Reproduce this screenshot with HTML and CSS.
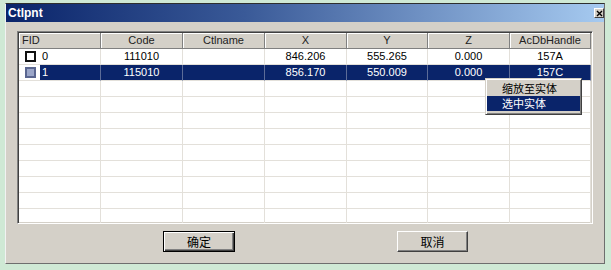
FILE: index.html
```html
<!DOCTYPE html>
<html>
<head>
<meta charset="utf-8">
<link rel="stylesheet" href="styles.css">
</head>
<body>
<div class="dialog">
  <div class="titlebar">
    <span class="title">Ctlpnt</span>
    <span class="close"><svg width="7" height="7" viewBox="0 0 7 7"><path d="M1 1 L6 6 M6 1 L1 6" stroke="#000" stroke-width="1.4"/></svg></span>
  </div>
  <div class="content">
    <div class="grid">
      <div class="row head">
        <div class="cell left">FID</div>
        <div class="cell">Code</div>
        <div class="cell">Ctlname</div>
        <div class="cell">X</div>
        <div class="cell">Y</div>
        <div class="cell">Z</div>
        <div class="cell">AcDbHandle</div>
      </div>
      <div class="row">
        <div class="cell fid"><span class="cbwrap"><span class="cb"></span></span><span class="fidtext">0</span></div>
        <div class="cell">111010</div>
        <div class="cell"></div>
        <div class="cell">846.206</div>
        <div class="cell">555.265</div>
        <div class="cell">0.000</div>
        <div class="cell">157A</div>
      </div>
      <div class="row sel">
        <div class="cell fid"><span class="cbwrap"><span class="cb cbsel"></span></span><span class="fidtext">1</span></div>
        <div class="cell">115010</div>
        <div class="cell"></div>
        <div class="cell">856.170</div>
        <div class="cell">550.009</div>
        <div class="cell">0.000</div>
        <div class="cell">157C</div>
      </div>
      <div class="row"><div class="cell"></div><div class="cell"></div><div class="cell"></div><div class="cell"></div><div class="cell"></div><div class="cell"></div><div class="cell"></div></div>
      <div class="row"><div class="cell"></div><div class="cell"></div><div class="cell"></div><div class="cell"></div><div class="cell"></div><div class="cell"></div><div class="cell"></div></div>
      <div class="row"><div class="cell"></div><div class="cell"></div><div class="cell"></div><div class="cell"></div><div class="cell"></div><div class="cell"></div><div class="cell"></div></div>
      <div class="row"><div class="cell"></div><div class="cell"></div><div class="cell"></div><div class="cell"></div><div class="cell"></div><div class="cell"></div><div class="cell"></div></div>
      <div class="row"><div class="cell"></div><div class="cell"></div><div class="cell"></div><div class="cell"></div><div class="cell"></div><div class="cell"></div><div class="cell"></div></div>
      <div class="row"><div class="cell"></div><div class="cell"></div><div class="cell"></div><div class="cell"></div><div class="cell"></div><div class="cell"></div><div class="cell"></div></div>
      <div class="row"><div class="cell"></div><div class="cell"></div><div class="cell"></div><div class="cell"></div><div class="cell"></div><div class="cell"></div><div class="cell"></div></div>
      <div class="row"><div class="cell"></div><div class="cell"></div><div class="cell"></div><div class="cell"></div><div class="cell"></div><div class="cell"></div><div class="cell"></div></div>
      <div class="row"><div class="cell"></div><div class="cell"></div><div class="cell"></div><div class="cell"></div><div class="cell"></div><div class="cell"></div><div class="cell"></div></div>
    </div>
    <div class="buttons">
      <button class="btn default">确定</button>
      <button class="btn cancel">取消</button>
    </div>
  </div>
  <div class="menu">
    <div class="item">缩放至实体</div>
    <div class="item active">选中实体</div>
  </div>
</div>
</body>
</html>
```
FILE: styles.css
```css
html, body {
  margin: 0;
  padding: 0;
}
body {
  width: 611px;
  height: 270px;
  overflow: hidden;
  background: #cfe9d5;
  font-family: "Liberation Sans", "Noto Sans CJK SC", sans-serif;
  font-size: 11px;
  color: #000;
}
.dialog {
  position: relative;
  margin: 3px 0 0 5px;
  width: 600px;
  height: 261px;
  box-sizing: border-box;
  background: #d4d0c8;
  border-top: 1px solid #2e2e2e;
  border-left: 1px solid #f2f2f2;
  border-right: 1px solid #6e6e6e;
  border-bottom: 1px solid #6e6e6e;
  display: flex;
  flex-direction: column;
}
.titlebar {
  height: 18px;
  background: linear-gradient(to right, #0a246a 0%, #3a5a98 40%, #a6caf0 100%);
  color: #fff;
  display: flex;
  align-items: center;
  justify-content: space-between;
  padding-left: 2px;
}
.title {
  font-weight: bold;
  font-size: 12px;
}
.close {
  width: 8px;
  height: 8px;
  margin-right: 0;
  background: #d4d0c8;
  border: 1px solid;
  border-color: #fff #404040 #404040 #fff;
  display: flex;
  align-items: center;
  justify-content: center;
}
.close svg { display: block; }
.content {
  padding: 9px 10px 0 11px;
}
.grid {
  width: 576px;
  height: 193px;
  box-sizing: border-box;
  background: #fff;
  border: 1px solid;
  border-color: #808080 #ffffff #ffffff #808080;
  box-shadow: inset 1px 1px 0 #404040, inset -1px -1px 0 #d4d0c8;
  padding: 1px;
  overflow: hidden;
}
.row {
  display: grid;
  grid-template-columns: 82px 82px 82px 82px 81px 82px 81px;
  height: 16px;
}
.cell {
  box-sizing: border-box;
  border-right: 1px solid #e3e0da;
  border-bottom: 1px solid #e3e0da;
  text-align: center;
  line-height: 15px;
  white-space: nowrap;
  overflow: hidden;
}
.head .cell {
  background: #d4d0c8;
  border-right: 1px solid #808080;
  border-bottom: 1px solid #808080;
  box-shadow: inset 1px 1px 0 #fff;
  color: #222;
}
.head .cell.left {
  text-align: left;
  padding-left: 3px;
}
.fid {
  display: flex;
  text-align: left;
}
.cbwrap {
  width: 21px;
  height: 15px;
  background: #fff;
  display: flex;
  align-items: center;
  flex: none;
}
.cb {
  margin-left: 6px;
  width: 11px;
  height: 11px;
  box-sizing: border-box;
  border: 2px solid #111;
  background: #fff;
}
.cb.cbsel {
  border-color: #5a6690;
  background: #9ba6c9;
}
.fidtext {
  flex: 1;
  padding-left: 2px;
}
.sel .cell {
  background: #0a246a;
  color: #fff;
  border-right-color: #5c6c98;
}
.sel .cell.fid {
  background: #0a246a;
}
.buttons {
  display: flex;
  margin-top: 7px;
}
.btn {
  height: 21px;
  box-sizing: border-box;
  background: #d4d0c8;
  font-family: "Noto Sans CJK SC", sans-serif;
  font-size: 12px;
  color: #000;
  padding: 0;
  line-height: 17px;
}
.btn.default {
  margin-left: 146px;
  width: 72px;
  border: 1px solid #000;
  box-shadow: inset 1px 1px 0 #fff, inset -1px -1px 0 #404040, inset -2px -2px 0 #808080;
}
.btn.cancel {
  margin-left: 162px;
  width: 71px;
  border: 1px solid;
  border-color: #fff #404040 #404040 #fff;
  box-shadow: inset -1px -1px 0 #808080;
}
.menu {
  position: absolute;
  left: 479px;
  top: 74px;
  width: 97px;
  box-sizing: border-box;
  background: #d4d0c8;
  border: 1px solid;
  border-color: #d4d0c8 #404040 #404040 #d4d0c8;
  box-shadow: inset 1px 1px 0 #fff, inset -1px -1px 0 #808080;
  padding: 2px 1px 3px 1px;
}
.item {
  height: 15px;
  line-height: 15px;
  padding-left: 15px;
  font-family: "Noto Sans CJK SC", sans-serif;
  font-size: 11px;
  color: #000;
}
.item.active {
  background: #0a246a;
  color: #fff;
}
```
